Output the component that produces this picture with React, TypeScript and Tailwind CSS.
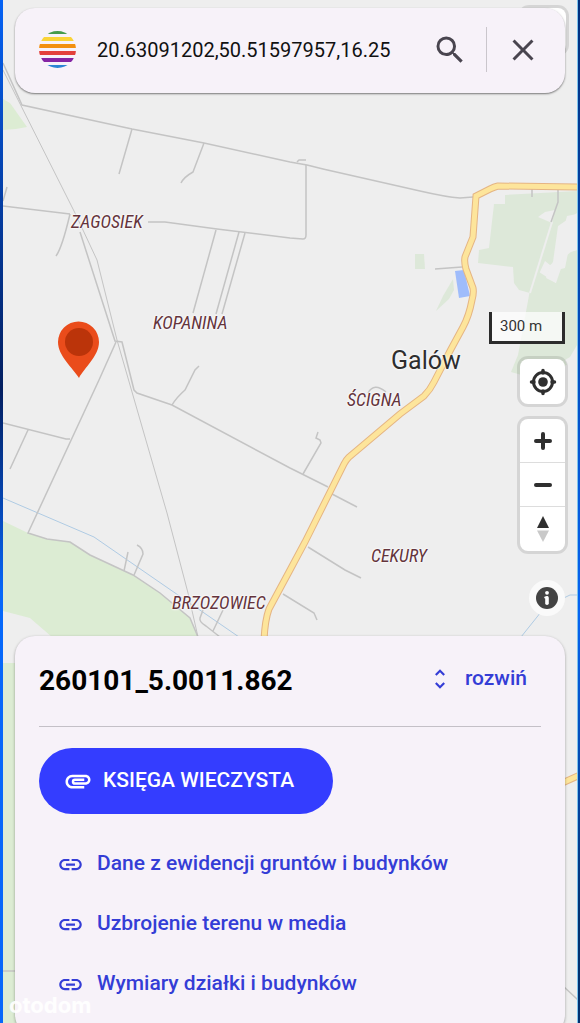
import { useState } from "react";
import {
	MdAttachment,
	MdClose,
	MdLink,
	MdSearch,
	MdUnfoldMore,
} from "react-icons/md";

const places = [
	{ name: "ZAGOSIEK", className: "left-[68px] top-[212px]" },
	{ name: "KOPANINA", className: "left-[150px] top-[313px]" },
	{ name: "ŚCIGNA", className: "left-[344px] top-[390px]" },
	{ name: "CEKURY", className: "left-[368px] top-[546px]" },
	{ name: "BRZOZOWIEC", className: "left-[169px] top-[593px]" },
];

const links = [
	"Dane z ewidencji gruntów i budynków",
	"Uzbrojenie terenu w media",
	"Wymiary działki i budynków",
];

const mainRoad =
	"M580 187L498 186Q494 187 490 189L476 196L473 237L465 257Q464 262 466 269L473 288Q474 293 472 300Q469 316 463 327L450 351L434 382Q430 390 424 396L400 414L349 457Q346 460 344 464L330 492L305 542L290 570L269 609Q265 620 264 640M560 784L580 775";

function MapCanvas() {
	return (
		<svg
			className="absolute left-0 top-0"
			width="574"
			height="1023"
			viewBox="3 0 574 1023"
			fill="none"
			aria-hidden="true"
		>
			<g fill="#dcecd3">
				<path d="M3 99L10 103L27 127L16 129L3 130Z" />
				<path d="M3 521L28 533L47 539L70 542L90 555L133 575L160 593L190 618L198 637H52L30 618L3 611Z" />
				<path d="M3 663H24V1023H3Z" />
			</g>
			<g fill="#dde8d9">
				<path d="M505 195L577 191V214L567 216L555 262L550 265L545 261L530 293L519 290L514 283L513 267L478 263L479 250L489 248L494 204H505Z" />
				<path d="M539 272L556 283L557 270L565 268L568 253L577 250V345L570 357L565 360L567 365L525 376L511 372L518 355L530 290Z" />
				<path d="M415 254H424L425 269H415Z" />
				<path d="M453 279L443 296L436 311L449 299L454 290Z" />
			</g>
			<path
				fill="#eee"
				d="M538 217L545 212L555 210L552 223ZM558 226L577 213V250L572 251L565 257L556 283L546 278L550 266L553 262Z"
			/>
			<path d="M552 222L530 293" stroke="#eee" strokeWidth="2" />
			<path d="M455 271L464 270L470 296L459 298Z" fill="#9fbcfb" />
			<path
				stroke="#afcbe4"
				d="M3 498L94 537L178 595L239 637M521 637L545 607L570 595H578"
			/>
			<g stroke="#c4c4c4" strokeWidth="1.5">
				<path d="M3 63L22 105L132 129L204 143L290 162L307 165L323 169L420 191Q446 197 460 198L473 197" />
				<path d="M132 129L119 174M204 143L193 172Q184 177 181 183M3 201L7 187" />
				<path d="M3 206L70 214M148 222H165L217 229L290 238L303 239Q306 239 306 235V165M297 162L299 160H306" />
				<path d="M70 214Q62 248 56 256M80 232L115 341L122 342L134 390L137 393L172 405L290 468L328 487M332 494L357 507" />
				<path d="M199 366L195 370Q189 382 185 390Q176 398 172 405M216 230L193 313M239 232L216 314M245 233L222 314" />
				<path d="M116 342L99 380L28 533L47 539L70 542L90 555L133 575L160 593L190 618L198 637M3 423L66 439H70M28 430L10 469" />
				<path d="M124 571L128 552M134 575L143 554Q143 548 137 545M203 610L200 618Q199 622 206 626L220 637M223 610L213 631" />
				<path d="M308 547L345 570L361 578M283 594L314 613L317 620M303 474L321 443L320 440L316 438L318 432" />
				<path d="M368 393Q374 382 386 392M435 269L462 267M558 188V202L551 222M532 188V197M3 971H20M563 986L578 1000" />
				<path d="M3 70L75 213L97 260L117 340L145 437L167 513L188 593L198 637" strokeWidth="1" />
			</g>
			<path d={mainRoad} stroke="#e5b583" strokeWidth="7" />
			<path d={mainRoad} stroke="#fde59b" strokeWidth="5" />
			<path
				fill="#ea4c1b"
				d="M79 378C73 368 58 356 58 342A20.5 20.5 0 0 1 99 342C99 356 84 368 79 378Z"
			/>
			<circle cx="79" cy="342" r="14" fill="#bb340a" />
		</svg>
	);
}

function Logo() {
	return (
		<svg className="size-[37px] shrink-0" viewBox="0 0 37 37" role="img" aria-label="Logo">
			<defs>
				<clipPath id="disc">
					<circle cx="18.5" cy="18.5" r="18.5" />
				</clipPath>
			</defs>
			<g clipPath="url(#disc)">
				<path fill="#459a4b" d="M0 0H37V3H0Z" />
				<path fill="#fad438" d="M0 6H37V10H0Z" />
				<path fill="#f3900f" d="M0 13H37V17H0Z" />
				<path fill="#e3403c" d="M0 20H37V24H0Z" />
				<path fill="#8424a4" d="M0 27H37V31H0Z" />
				<path fill="#2b84d4" d="M0 34H37V37H0Z" />
			</g>
		</svg>
	);
}

function MapControls() {
	return (
		<div className="relative mr-3 flex flex-1 flex-col items-end justify-end pb-5">
			<div className="mb-[15px] h-8 w-[76px] border-[3px] border-t-0 border-[#2c2c2c] bg-white/70 pl-2 text-[15px] leading-7 text-[#333]">
				300 m
			</div>
			<button
				aria-label="Moja lokalizacja"
				className="mb-[15px] flex size-[45px] items-center justify-center rounded-lg bg-white ring-[3px] ring-black/10"
			>
				<svg width="28" height="28" viewBox="0 0 28 28" aria-hidden="true">
					<circle cx="14" cy="14" r="9.5" fill="none" stroke="#2f2f2f" strokeWidth="3" />
					<circle cx="14" cy="14" r="4.8" fill="#2f2f2f" />
					<path
						d="M14 2.5V5M14 23V25.5M2.5 14H5M23 14H25.5"
						stroke="#2f2f2f"
						strokeWidth="3.5"
						strokeLinecap="round"
					/>
				</svg>
			</button>
			<div className="mb-[29px] flex w-[45px] flex-col divide-y divide-[#ddd] rounded-lg bg-white ring-[3px] ring-black/10">
				<button aria-label="Przybliż" className="flex h-11 items-center justify-center">
					<svg width="18" height="18" viewBox="0 0 18 18" aria-hidden="true">
						<path d="M2 9H16M9 2V16" stroke="#2f2f2f" strokeWidth="4" strokeLinecap="round" />
					</svg>
				</button>
				<button aria-label="Oddal" className="flex h-11 items-center justify-center">
					<svg width="18" height="18" viewBox="0 0 18 18" aria-hidden="true">
						<path d="M2 9H16" stroke="#2f2f2f" strokeWidth="4" strokeLinecap="round" />
					</svg>
				</button>
				<button aria-label="Obróć na północ" className="flex h-11 items-center justify-center">
					<svg width="12" height="26" viewBox="0 0 12 26" aria-hidden="true">
						<path d="M0 12L6 0L12 12Z" fill="#2f2f2f" />
						<path d="M0 14.5H12L6 26Z" fill="#c9c9c9" />
					</svg>
				</button>
			</div>
			<button
				aria-label="Informacje"
				className="flex size-9 items-center justify-center rounded-full bg-[#fafafa]"
			>
				<svg width="22" height="22" viewBox="0 0 22 22" aria-hidden="true">
					<circle cx="11" cy="11" r="11" fill="#434343" />
					<circle cx="11" cy="5.8" r="1.9" fill="#fff" />
					<path d="M9.2 10.5H11V16" fill="none" stroke="#fff" strokeWidth="2" strokeLinecap="round" />
					<path d="M11 10.8V16.2" stroke="#fff" strokeWidth="3.6" strokeLinecap="round" />
				</svg>
			</button>
		</div>
	);
}

export default function App() {
	const [query, setQuery] = useState("20.63091202,50.51597957,16.25");

	return (
		<div className="flex min-h-screen font-[Roboto,sans-serif]">
			<div className="w-[3px] shrink-0 bg-linear-to-b from-[#0563f5] via-[#031f60] via-38% to-[#0668fa] to-58%" />
			<main className="relative flex min-w-0 flex-1 flex-col overflow-hidden bg-[#eee]">
				<MapCanvas />
				{places.map((place) => (
					<span
						key={place.name}
						className={`absolute font-['Roboto_Condensed',Roboto,sans-serif] text-[18px] leading-5 text-[#64343c] italic [text-shadow:0_0_2px_#fff,0_0_2px_#fff,0_0_3px_#fff] ${place.className}`}
					>
						{place.name}
					</span>
				))}
				<span className="absolute left-[388px] top-[345px] text-[25px] leading-8 text-[#2e2e2e] [text-shadow:0_0_2px_#fff,0_0_3px_#fff]">
					Galów
				</span>
				<div className="absolute right-[11px] top-2 size-[45px] rounded-lg bg-white ring-[3px] ring-black/10" />

				<form
					role="search"
					onSubmit={(e) => e.preventDefault()}
					className="relative mx-3 mt-2 flex h-[85px] shrink-0 items-center gap-[18px] rounded-[20px] bg-[#f7f2f9] px-6 pb-0.5 shadow-[0_1px_2px_rgba(0,0,0,0.5)]"
				>
					<Logo />
					<input
						aria-label="Szukaj działki"
						value={query}
						onChange={(e) => setQuery(e.target.value)}
						className="ml-[3px] min-w-0 flex-1 bg-transparent text-[20px] text-[#111] outline-none"
					/>
					<button type="submit" aria-label="Szukaj">
						<MdSearch className="size-9 text-[#49454f]" />
					</button>
					<div className="h-[45px] w-px bg-[#cac6cc]" />
					<button type="button" aria-label="Wyczyść" onClick={() => setQuery("")}>
						<MdClose className="size-9 text-[#49454f]" />
					</button>
				</form>

				<MapControls />

				<section className="relative mx-3 -mb-3 shrink-0 rounded-[20px] bg-[#f7f2f9] px-6 pb-[21px] shadow-[0_1px_3px_rgba(0,0,0,0.35)]">
					<div className="flex h-[91px] items-center justify-between border-b border-[#c4c0c7]">
						<h1 className="text-[28px] font-bold text-black">260101_5.0011.862</h1>
						<button className="mr-[14px] flex items-center gap-3 pb-1 text-[21px] font-medium text-[#343dd6]">
							<MdUnfoldMore className="size-[26px]" />
							rozwiń
						</button>
					</div>
					<button className="mt-[21px] flex h-[66px] items-center gap-2.5 rounded-full bg-[#343dff] pr-9 pl-6 text-[21px] font-medium text-white">
						<MdAttachment className="size-[30px]" />
						<span className="pr-[3px]">KSIĘGA WIECZYSTA</span>
					</button>
					<ul className="mt-5">
						{links.map((link) => (
							<li key={link} className="flex h-[60px] items-center">
								<a
									href="#"
									className="ml-[18px] flex items-center gap-[13px] text-[21px] font-medium text-[#343dd6]"
								>
									<MdLink className="size-[27px]" />
									{link}
								</a>
							</li>
						))}
					</ul>
				</section>
				<span className="absolute bottom-1 left-[6px] font-[Inter,sans-serif] text-[22px] leading-7 font-bold text-white/90">
					otodom
				</span>
			</main>
			<div className="w-[3px] shrink-0 border-l border-[#7cc4ee] bg-linear-to-b from-[#032f7c] via-[#0763f2] via-60% to-[#03306f] to-90%" />
		</div>
	);
}
